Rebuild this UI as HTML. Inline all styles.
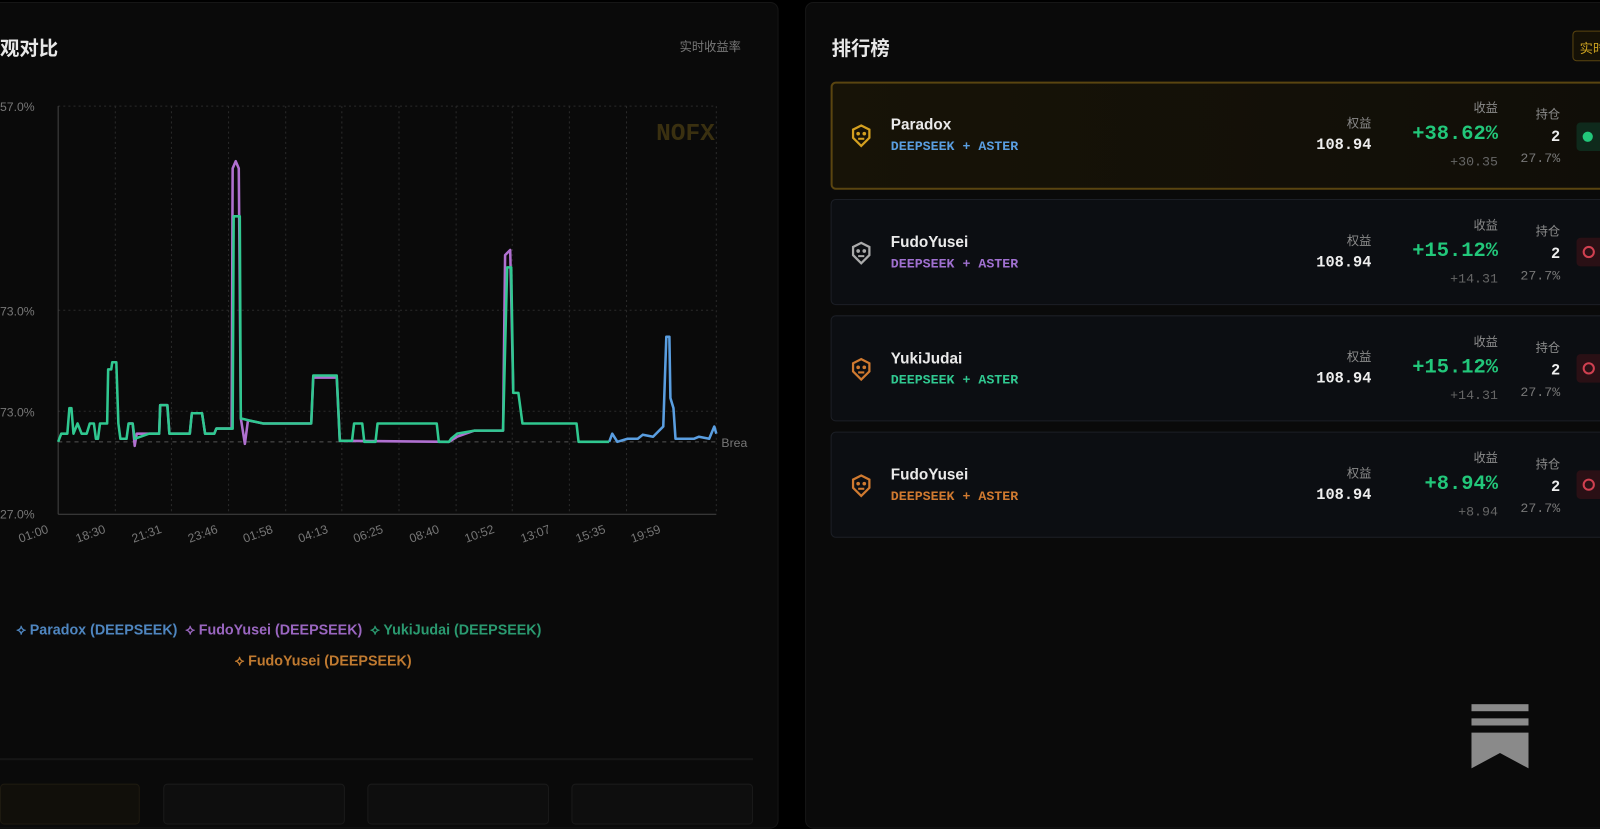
<!DOCTYPE html>
<html><head><meta charset="utf-8"><style>
*{margin:0;padding:0;box-sizing:border-box}
body{width:1600px;height:800px;background:#000;overflow:hidden;position:relative;font-family:"Liberation Sans","Noto Sans CJK SC",sans-serif;color:#e6e6e6}
#w{position:absolute;left:0;top:0;width:1568px;height:784px;transform:scale(1.0204);transform-origin:0 0}
.lp{position:absolute;left:-10px;top:2px;width:773px;height:810px;background:#0a0a0a;border:1px solid #161616;border-radius:8px}
.rp{position:absolute;left:789px;top:2px;width:830px;height:810px;background:#0a0a0a;border:1px solid #161616;border-radius:8px}
.t{position:absolute;font-size:19px;font-weight:bold;color:#e8e8e8}
.mono{font-family:"Liberation Mono","DejaVu Sans Mono","Noto Sans CJK SC",monospace}
.card{position:absolute;left:814px;width:800px;height:104px;background:#0c0e12;border:1px solid #1c1f26;border-radius:5px}
.card.g{background:linear-gradient(90deg,#171307,#100e08);border:2px solid #5a4510}
.ab{position:absolute;color:#8a8a8a;font-size:13px}
.nm{position:absolute;left:58px;top:34px;font-size:15px;color:#eaeaea;font-weight:bold}
.sb{position:absolute;left:58px;top:56px;font-size:13px;font-weight:bold;font-family:"Liberation Mono",monospace}
</style></head><body><div id="w">
<div class="lp"></div>
<div class="rp"></div>
<div class="t" style="left:0;top:33px">观对比</div>
<div style="position:absolute;left:666px;top:37px;font-size:12px;color:#777">实时收益率</div>
<svg style="position:absolute;left:0;top:0" width="770" height="560">
<g stroke="#2a2a2a" stroke-dasharray="2,3" stroke-width="1">
<line x1="57" y1="104" x2="702" y2="104"/><line x1="57" y1="304" x2="702" y2="304"/><line x1="57" y1="403" x2="702" y2="403"/>
<line x1="113" y1="104" x2="113" y2="503"/><line x1="168" y1="104" x2="168" y2="503"/><line x1="224" y1="104" x2="224" y2="503"/><line x1="280" y1="104" x2="280" y2="503"/><line x1="335" y1="104" x2="335" y2="503"/><line x1="391" y1="104" x2="391" y2="503"/><line x1="447" y1="104" x2="447" y2="503"/><line x1="502" y1="104" x2="502" y2="503"/><line x1="558" y1="104" x2="558" y2="503"/><line x1="614" y1="104" x2="614" y2="503"/><line x1="702" y1="104" x2="702" y2="503"/>
</g>
<line x1="57" y1="104" x2="57" y2="504" stroke="#444"/><line x1="57" y1="504" x2="702" y2="504" stroke="#444"/>
<line x1="57" y1="433" x2="702" y2="433" stroke="#555" stroke-dasharray="4,4"/>
<g font-size="12" fill="#777" font-family="Liberation Sans">
<text x="0" y="109">57.0%</text><text x="0" y="309">73.0%</text><text x="0" y="408">73.0%</text><text x="0" y="508">27.0%</text>
<text x="707" y="438">Brea</text>
</g>
<text x="643" y="137" font-size="24" font-family="Liberation Mono" font-weight="bold" fill="#3a3010">NOFX</text>
<g font-size="12" fill="#777">
<text transform="translate(20,532) rotate(-20)">01:00</text><text transform="translate(76,532) rotate(-20)">18:30</text><text transform="translate(131,532) rotate(-20)">21:31</text><text transform="translate(186,532) rotate(-20)">23:46</text><text transform="translate(240,532) rotate(-20)">01:58</text><text transform="translate(294,532) rotate(-20)">04:13</text><text transform="translate(348,532) rotate(-20)">06:25</text><text transform="translate(403,532) rotate(-20)">08:40</text><text transform="translate(457,532) rotate(-20)">10:52</text><text transform="translate(512,532) rotate(-20)">13:07</text><text transform="translate(566,532) rotate(-20)">15:35</text><text transform="translate(620,532) rotate(-20)">19:59</text>
</g>
<g fill="none" stroke-width="2.5" stroke-linejoin="round">
<polyline stroke="#b070d0" points="126,415 130,415 132,437 134,425 146,425 156,425 157,397 164,397 166,425 186,425 188,405 198,405 201,425 210,425 212,420 227,420 228,165 231,158 234,165 236,410 240,435 243,412 258,415 305,415 307,370 330,370 333,432 440,433 448,428 465,422 493,422 495,250 500,245 503,385"/>
<polyline stroke="#5a9ee0" points="597,433 600,425 605,433 615,430 625,430 630,426 640,428 650,418 653,330 656,330 657,390 660,400 662,430 680,430 685,428 695,430 700,418 702,425"/>
<polyline stroke="#30c890" points="57,433 60,425 66,425 68,400 70,400 72,425 76,415 80,425 85,425 88,415 92,415 94,430 96,430 98,415 105,415 106,362 109,362 110,355 114,355 116,415 118,430 124,430 126,415 130,415 132,430 146,425 156,425 157,397 164,397 166,425 186,425 188,405 198,405 201,425 210,425 212,420 228,420 229,212 235,212 236,410 244,412 258,415 305,415 307,368 330,368 333,432 345,432 347,415 355,415 357,433 368,433 370,415 428,415 430,433 440,433 442,430 448,425 465,422 493,422 497,262 501,262 503,385 508,385 512,415 565,415 567,433 597,433"/>
</g>
</svg>
<div style="position:absolute;left:16px;top:609px;font-size:14px;font-weight:bold;white-space:nowrap">
<span style="color:#4f86c0">⟡ Paradox (DEEPSEEK)</span>&nbsp;&nbsp;<span style="color:#9a66c0">⟡ FudoYusei (DEEPSEEK)</span>&nbsp;&nbsp;<span style="color:#2a9a70">⟡ YukiJudai (DEEPSEEK)</span></div>
<div style="position:absolute;left:230px;top:639px;font-size:14px;font-weight:bold;color:#c07a30">⟡ FudoYusei (DEEPSEEK)</div>
<div style="position:absolute;left:0;top:743px;width:738px;height:2px;background:#161616"></div>
<div style="position:absolute;left:0;top:768px;width:137px;height:40px;background:#110f0a;border:1px solid #1e1a10;border-radius:4px"></div>
<div style="position:absolute;left:160px;top:768px;width:178px;height:40px;background:#0e0e0e;border:1px solid #1a1a1a;border-radius:4px"></div>
<div style="position:absolute;left:360px;top:768px;width:178px;height:40px;background:#0e0e0e;border:1px solid #1a1a1a;border-radius:4px"></div>
<div style="position:absolute;left:560px;top:768px;width:178px;height:40px;background:#0e0e0e;border:1px solid #1a1a1a;border-radius:4px"></div>

<div class="t" style="left:815px;top:33px">排行榜</div>
<div style="position:absolute;left:1541px;top:30px;width:70px;height:30px;border:1px solid #5a4510;background:#151106;border-radius:4px;color:#c9a020;font-size:13px;padding:6px 6px">实时</div>

<div class="card g" style="top:80px;height:106px"></div>
<div class="card" style="top:195px"></div>
<div class="card" style="top:309px"></div>
<div class="card" style="top:423px"></div>

<svg style="position:absolute;left:833px;top:121px" width="22" height="24" viewBox="0 0 22 24"><path d="M11 2 L19 6 L19 14 L11 22 L3 14 L3 6 Z" fill="none" stroke="#d4a020" stroke-width="2.2"/><circle cx="8" cy="10" r="1.8" fill="#d4a020"/><circle cx="14" cy="10" r="1.8" fill="#d4a020"/><path d="M8 15 h6" stroke="#d4a020" stroke-width="2"/></svg>
<div style="position:absolute;left:815px;top:80px;width:780px;height:106px">
<div class="nm">Paradox</div><div class="sb" style="color:#5a9ee0">DEEPSEEK + ASTER</div></div>
<svg style="position:absolute;left:833px;top:236px" width="22" height="24" viewBox="0 0 22 24"><path d="M11 2 L19 6 L19 14 L11 22 L3 14 L3 6 Z" fill="none" stroke="#aaa" stroke-width="2.2"/><circle cx="8" cy="10" r="1.8" fill="#aaa"/><circle cx="14" cy="10" r="1.8" fill="#aaa"/><path d="M8 15 h6" stroke="#aaa" stroke-width="2"/></svg>
<div style="position:absolute;left:815px;top:195px;width:780px;height:104px">
<div class="nm">FudoYusei</div><div class="sb" style="color:#a070d0">DEEPSEEK + ASTER</div></div>
<svg style="position:absolute;left:833px;top:350px" width="22" height="24" viewBox="0 0 22 24"><path d="M11 2 L19 6 L19 14 L11 22 L3 14 L3 6 Z" fill="none" stroke="#d07a30" stroke-width="2.2"/><circle cx="8" cy="10" r="1.8" fill="#d07a30"/><circle cx="14" cy="10" r="1.8" fill="#d07a30"/><path d="M8 15 h6" stroke="#d07a30" stroke-width="2"/></svg>
<div style="position:absolute;left:815px;top:309px;width:780px;height:104px">
<div class="nm">YukiJudai</div><div class="sb" style="color:#30c890">DEEPSEEK + ASTER</div></div>
<svg style="position:absolute;left:833px;top:464px" width="22" height="24" viewBox="0 0 22 24"><path d="M11 2 L19 6 L19 14 L11 22 L3 14 L3 6 Z" fill="none" stroke="#d07a30" stroke-width="2.2"/><circle cx="8" cy="10" r="1.8" fill="#d07a30"/><circle cx="14" cy="10" r="1.8" fill="#d07a30"/><path d="M8 15 h6" stroke="#d07a30" stroke-width="2"/></svg>
<div style="position:absolute;left:815px;top:423px;width:780px;height:104px">
<div class="nm">FudoYusei</div><div class="sb" style="color:#d07a30">DEEPSEEK + ASTER</div></div>

<div style="position:absolute;left:1200px;top:80px;width:400px;height:110px" class="mono">
<div class="ab" style="right:256px;top:32px;font-size:12px">权益</div><div style="position:absolute;right:256px;top:54px;font-size:15px;font-weight:bold;color:#eee">108.94</div>
<div class="ab" style="right:132px;top:17px;font-size:12px">收益</div><div style="position:absolute;right:132px;top:40px;font-size:20px;font-weight:bold;color:#22c77a">+38.62%</div><div class="ab" style="right:132px;top:71px;color:#666">+30.35</div>
<div class="ab" style="right:71px;top:23px;font-size:12px">持仓</div><div style="position:absolute;right:71px;top:46px;font-size:15px;font-weight:bold;color:#eee">2</div><div class="ab" style="right:71px;top:68px;color:#777">27.7%</div>
<div style="position:absolute;left:345px;top:40px;width:60px;height:28px;background:#0f2a1c;border-radius:4px"><div style="position:absolute;left:6px;top:9px;width:10px;height:10px;border-radius:50%;background:#22c77a"></div></div>
</div>
<div style="position:absolute;left:1200px;top:195px;width:400px;height:110px" class="mono">
<div class="ab" style="right:256px;top:32px;font-size:12px">权益</div><div style="position:absolute;right:256px;top:54px;font-size:15px;font-weight:bold;color:#eee">108.94</div>
<div class="ab" style="right:132px;top:17px;font-size:12px">收益</div><div style="position:absolute;right:132px;top:40px;font-size:20px;font-weight:bold;color:#22c77a">+15.12%</div><div class="ab" style="right:132px;top:71px;color:#666">+14.31</div>
<div class="ab" style="right:71px;top:23px;font-size:12px">持仓</div><div style="position:absolute;right:71px;top:46px;font-size:15px;font-weight:bold;color:#eee">2</div><div class="ab" style="right:71px;top:68px;color:#777">27.7%</div>
<div style="position:absolute;left:345px;top:38px;width:60px;height:28px;background:#2a1015;border-radius:4px"><div style="position:absolute;left:6px;top:8px;width:12px;height:12px;border-radius:50%;border:2px solid #d04050"></div></div>
</div>
<div style="position:absolute;left:1200px;top:309px;width:400px;height:110px" class="mono">
<div class="ab" style="right:256px;top:32px;font-size:12px">权益</div><div style="position:absolute;right:256px;top:54px;font-size:15px;font-weight:bold;color:#eee">108.94</div>
<div class="ab" style="right:132px;top:17px;font-size:12px">收益</div><div style="position:absolute;right:132px;top:40px;font-size:20px;font-weight:bold;color:#22c77a">+15.12%</div><div class="ab" style="right:132px;top:71px;color:#666">+14.31</div>
<div class="ab" style="right:71px;top:23px;font-size:12px">持仓</div><div style="position:absolute;right:71px;top:46px;font-size:15px;font-weight:bold;color:#eee">2</div><div class="ab" style="right:71px;top:68px;color:#777">27.7%</div>
<div style="position:absolute;left:345px;top:38px;width:60px;height:28px;background:#2a1015;border-radius:4px"><div style="position:absolute;left:6px;top:8px;width:12px;height:12px;border-radius:50%;border:2px solid #d04050"></div></div>
</div>
<div style="position:absolute;left:1200px;top:423px;width:400px;height:110px" class="mono">
<div class="ab" style="right:256px;top:32px;font-size:12px">权益</div><div style="position:absolute;right:256px;top:54px;font-size:15px;font-weight:bold;color:#eee">108.94</div>
<div class="ab" style="right:132px;top:17px;font-size:12px">收益</div><div style="position:absolute;right:132px;top:40px;font-size:20px;font-weight:bold;color:#22c77a">+8.94%</div><div class="ab" style="right:132px;top:71px;color:#666">+8.94</div>
<div class="ab" style="right:71px;top:23px;font-size:12px">持仓</div><div style="position:absolute;right:71px;top:46px;font-size:15px;font-weight:bold;color:#eee">2</div><div class="ab" style="right:71px;top:68px;color:#777">27.7%</div>
<div style="position:absolute;left:345px;top:38px;width:60px;height:28px;background:#2a1015;border-radius:4px"><div style="position:absolute;left:6px;top:8px;width:12px;height:12px;border-radius:50%;border:2px solid #d04050"></div></div>
</div>

<svg style="position:absolute;left:1442px;top:690px" width="56" height="64" viewBox="0 0 56 64"><rect x="0" y="0" width="56" height="7" fill="#8a8a8a"/><rect x="0" y="14" width="56" height="7" fill="#8a8a8a"/><path d="M0 28 H56 V63 L28 48 L0 63 Z" fill="#8a8a8a"/></svg>
</div></body></html>
